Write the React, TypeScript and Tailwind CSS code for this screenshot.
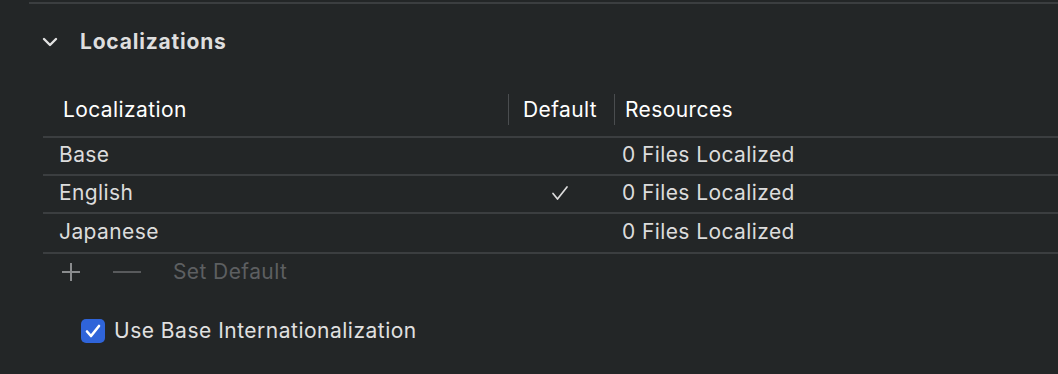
import React from 'react';

type Row = { name: string; isDefault: boolean; resources: string };

const rows: Row[] = [
  { name: 'Base', isDefault: false, resources: '0 Files Localized' },
  { name: 'English', isDefault: true, resources: '0 Files Localized' },
  { name: 'Japanese', isDefault: false, resources: '0 Files Localized' },
];

const Chevron = () => (
  <svg width="16" height="10" viewBox="0 0 16 10" fill="none">
    <path d="M2 2l6 6 6-6" stroke="#e2e2e2" strokeWidth="2.4" strokeLinecap="round" strokeLinejoin="round" />
  </svg>
);

const App: React.FC = () => {
  return (
    <div
      className="w-[1058px] h-[374px] bg-[#232627] overflow-hidden text-[#e0e0e0] text-[21px] tracking-[0.4px]"
      style={{ fontFamily: 'Inter, "Noto Sans", sans-serif' }}
    >
      <div className="mt-[2px] ml-[29px] h-[2px] bg-[#3b3e40]" />

      {/* section title */}
      <div className="flex items-center h-[76px] pb-[1px]">
        <div className="w-[80px] pl-[42px] flex items-center">
          <Chevron />
        </div>
        <span className="font-bold text-[#dedede] tracking-[0.8px]">Localizations</span>
      </div>

      {/* table */}
      <div className="ml-[43px]">
        <div className="flex items-center h-[56px] pt-[3px] text-white">
          <div className="w-[465px] pl-[20px]">Localization</div>
          <div className="w-[1px] h-[31px] bg-[#4a4d4f]" />
          <div className="w-[105px] pl-[14px]">Default</div>
          <div className="w-[1px] h-[31px] bg-[#4a4d4f]" />
          <div className="pl-[10px]">Resources</div>
        </div>
        {rows.map((r, i) => (
          <div key={r.name}>
            <div className="h-[2px] bg-[#3b3e40]" />
            <div
              className={`flex items-center pb-[2px] text-[#dcdcdc] ${i === rows.length - 1 ? 'h-[38px]' : 'h-[36px]'}`}
            >
              <div className="w-[466px] pl-[16px]">{r.name}</div>
              <div className="w-[106px] flex justify-center pr-[4px]">
                {r.isDefault && (
                  <svg width="18" height="16" viewBox="0 0 18 16" fill="none">
                    <path d="M2 8.5l4.5 5.5L16 2" stroke="#dcdcdc" strokeWidth="1.7" strokeLinecap="round" strokeLinejoin="round" />
                  </svg>
                )}
              </div>
              <div className="pl-[7px]">{r.resources}</div>
            </div>
          </div>
        ))}
        <div className="h-[2px] bg-[#3b3e40]" />

        {/* add / remove bar */}
        <div className="flex items-center h-[36px]">
          <div className="w-[70px] pl-[19px]">
            <svg width="18" height="18" viewBox="0 0 18 18">
              <path d="M9 0v18M0 9h18" stroke="#8a8c8e" strokeWidth="2" />
            </svg>
          </div>
          <div className="w-[60px]">
            <div className="w-[28px] h-[2px] bg-[#585a5c]" />
          </div>
          <span className="text-[#5d5f61]">Set Default</span>
        </div>
      </div>

      {/* base internationalization */}
      <div className="flex items-center mt-[25px] ml-[81px] gap-[9px]">
        <div className="w-[24px] h-[24px] rounded-[5px] bg-[#2f64d9] flex items-center justify-center">
          <svg width="16" height="14" viewBox="0 0 16 14" fill="none">
            <path d="M2 7.5l4 4.5L14 2" stroke="#fff" strokeWidth="2.6" strokeLinecap="round" strokeLinejoin="round" />
          </svg>
        </div>
        <span className="text-[#e0e0e0] tracking-[0.5px]">Use Base Internationalization</span>
      </div>
    </div>
  );
};

export default App;
